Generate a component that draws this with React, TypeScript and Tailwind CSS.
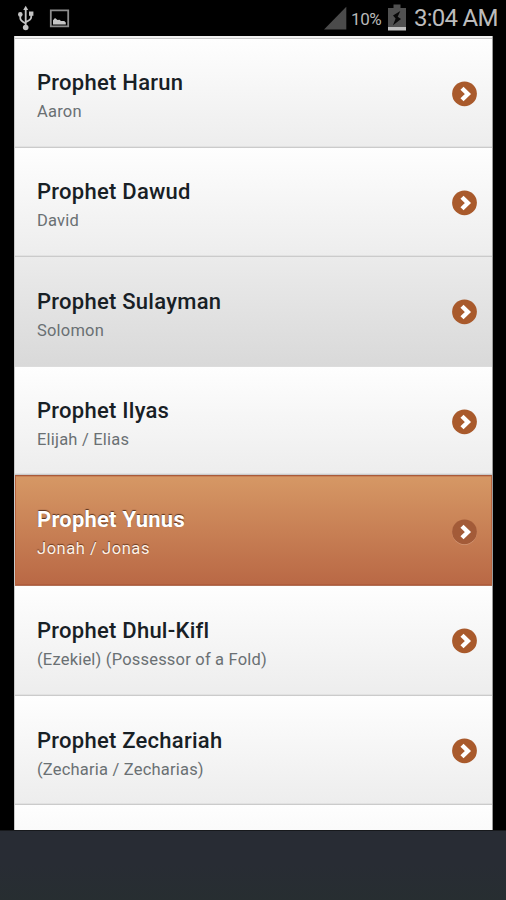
import React from "react";
import clsx from "clsx";

type Tone = "light" | "visited" | "active";

interface Prophet {
    name: string;
    alias: string;
    tone: Tone;
    height: string;
    offset: string;
}

const prophets: Prophet[] = [
    { name: "Prophet Harun", alias: "Aaron", tone: "light", height: "h-[109px]", offset: "pt-[31px]" },
    { name: "Prophet Dawud", alias: "David", tone: "light", height: "h-[109px]", offset: "pt-[31px]" },
    { name: "Prophet Sulayman", alias: "Solomon", tone: "visited", height: "h-[110px]", offset: "pt-[32px]" },
    { name: "Prophet Ilyas", alias: "Elijah / Elias", tone: "light", height: "h-[108px]", offset: "pt-[31px]" },
    { name: "Prophet Yunus", alias: "Jonah / Jonas", tone: "active", height: "h-[111px]", offset: "pt-[31px]" },
    { name: "Prophet Dhul-Kifl", alias: "(Ezekiel) (Possessor of a Fold)", tone: "light", height: "h-[110px]", offset: "pt-[32px]" },
    { name: "Prophet Zechariah", alias: "(Zecharia / Zecharias)", tone: "light", height: "h-[109px]", offset: "pt-[32px]" },
];

const rowTones: Record<Tone, string> = {
    light: "border-[#cbcbcb] bg-linear-to-b from-[#fefefe] to-[#ededed] shadow-[inset_0_-1px_0_#e2e2e2]",
    visited: "border-[#dcdcdc] bg-linear-to-b from-[#ebebeb] to-[#d9d9d9]",
    active: "border-t border-t-[#a95a3a] border-b-[#b07055] bg-linear-to-b from-[#d69865] to-[#b96845] shadow-[inset_1px_0_0_#b9643f,inset_-1px_0_0_#b9643f,inset_0_1px_0_#c98356,inset_0_-1px_0_#b15c3c]",
};

function StatusBar() {
    return (
        <div className="flex h-9 shrink-0 items-start justify-between bg-black pl-[17px] pr-[8px]">
            <div className="flex">
                <svg className="mt-[5px] h-[26px] w-[18px]" viewBox="0 0 18 26" fill="none" stroke="#c4c4c4" strokeWidth="1.8">
                    <path d="M8.7 4v18M3.3 10v3.2c0 2 1 2.8 5.4 5.3M14.2 9.5v2.7c0 2-1 2.8-5.5 5" />
                    <path d="M8.7.8 11.2 5H6.2z" fill="#c4c4c4" stroke="none" />
                    <circle cx="3.3" cy="9.4" r="2.3" fill="#c4c4c4" stroke="none" />
                    <path d="M12 6.5h4.4v4.3H12z" fill="#c4c4c4" stroke="none" />
                    <circle cx="8.7" cy="22.5" r="2.8" fill="#c4c4c4" stroke="none" />
                </svg>
                <svg className="ml-[14px] mt-[9px] h-[19px] w-[21px]" viewBox="0 0 21 19">
                    <path d="M1.8 1.3h17.4v16H1.8z" fill="none" stroke="#8d8d8d" strokeWidth="1.8" />
                    <path d="M4 15.5v-4.3l2-2.2 2.5 2 2-.3 1.5 1.3 3.2.1 1.6 1.5v1.9z" fill="#c6c6c6" />
                </svg>
            </div>
            <div className="flex">
                <svg className="mt-[6px] h-6 w-[23px]" viewBox="0 0 23 24">
                    <path d="M0 23.5 22.3.8v22.7z" fill="#4b4b4b" />
                </svg>
                <span className="ml-[4px] mt-[8px] w-[31px] whitespace-nowrap text-[17px] leading-[22px] tracking-[-0.4px] text-[#b8b8b8]">10%</span>
                <svg className="ml-[6px] mt-[4px] h-[27px] w-[18px]" viewBox="0 0 18 27">
                    <path d="M5.5.5h7V4H18v19H0V4h5.5z" fill="#505050" />
                    <path d="M0 23h18v3.5H0z" fill="#bdbdbd" />
                    <path d="M12.3 7 5 11.5l2.6 3L5 21.3l8-6.3-3.3-2.3z" fill="#080808" />
                </svg>
                <span className="ml-[8px] mt-[4px] w-[84px] whitespace-nowrap text-[24px] leading-7 tracking-[-0.75px] text-[#bcbcbc]">3:04 AM</span>
            </div>
        </div>
    );
}

function ArrowBadge({ active }: { active: boolean }) {
    return (
        <svg className="size-[26px]" viewBox="0 0 26 26" fill="none">
            {active && <circle cx="12.5" cy="13.6" r="12.4" fill="#d49978" />}
            <circle cx="12.5" cy="12.8" r="12.4" fill={active ? "#a35b38" : "#a95a2c"} />
            <path d="m10 7.2 5.9 5.8-5.9 5.8" stroke="#fff" strokeWidth="4.4" />
        </svg>
    );
}

function ProphetRow({ name, alias, tone, height, offset }: Prophet) {
    const active = tone === "active";

    return (
        <li className={clsx("flex items-start justify-between border-b pl-[22px] pr-[14px]", height, rowTones[tone])}>
            <div className={offset}>
                <h2
                    className={clsx(
                        "whitespace-nowrap text-[22px] leading-[26px]",
                        active
                            ? "font-bold tracking-[0.2px] text-white [text-shadow:0_-1px_1px_#54301f]"
                            : "font-medium tracking-[0.26px] text-[#182025]"
                    )}
                >
                    {name}
                </h2>
                <p
                    className={clsx(
                        "mt-[6px] whitespace-nowrap text-[16.5px] leading-5",
                        active
                            ? "tracking-[0.55px] text-[#fff2e9] [text-shadow:0_-1px_1px_#653820]"
                            : "tracking-[0.2px] text-[#6a7073]"
                    )}
                >
                    {alias}
                </p>
            </div>
            <div className={active ? "mt-[43px]" : "mt-[42px]"}>
                <ArrowBadge active={active} />
            </div>
        </li>
    );
}

export default function App() {
    return (
        <main className="flex h-[900px] w-[506px] flex-col overflow-hidden bg-black font-['Roboto',sans-serif]">
            <StatusBar />
            <div className="ml-[14px] mr-[13px] h-[794px] shrink-0 overflow-hidden border-x border-l-[#c9c9c9] border-r-[#9a9a9a] bg-white">
                {/* Bottom edge of the row scrolled out of view */}
                <div className="h-[3px] border-b border-[#c8c8c8] bg-[#f1f1f1]" />
                <ul>
                    {prophets.map((prophet) => (
                        <ProphetRow key={prophet.name} {...prophet} />
                    ))}
                </ul>
                <div className="h-[25px] bg-linear-to-b from-[#fefefe] to-[#fafafa]" />
            </div>
            <div className="grow border-t border-[#17191c] bg-linear-to-b from-[#282c34] from-50% to-[#272e31]" />
        </main>
    );
}
